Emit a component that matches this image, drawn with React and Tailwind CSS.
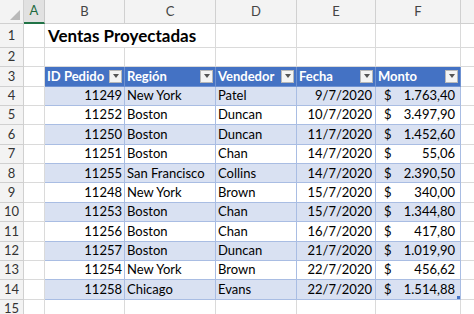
import React from 'react';

const cols = [
  { key: 'A', w: 'w-[21px]' },
  { key: 'B', w: 'w-[80px]' },
  { key: 'C', w: 'w-[91px]' },
  { key: 'D', w: 'w-[81px]' },
  { key: 'E', w: 'w-[79px]' },
  { key: 'F', w: 'w-[85px]' },
];

const rows = [
  ['11249', 'New York', 'Patel', '9/7/2020', '1.763,40'],
  ['11252', 'Boston', 'Duncan', '10/7/2020', '3.497,90'],
  ['11250', 'Boston', 'Duncan', '11/7/2020', '1.452,60'],
  ['11251', 'Boston', 'Chan', '14/7/2020', '55,06'],
  ['11255', 'San Francisco', 'Collins', '14/7/2020', '2.390,50'],
  ['11248', 'New York', 'Brown', '15/7/2020', '340,00'],
  ['11253', 'Boston', 'Chan', '15/7/2020', '1.344,80'],
  ['11256', 'Boston', 'Chan', '16/7/2020', '417,80'],
  ['11257', 'Boston', 'Duncan', '21/7/2020', '1.019,90'],
  ['11254', 'New York', 'Brown', '22/7/2020', '456,62'],
  ['11258', 'Chicago', 'Evans', '22/7/2020', '1.514,88'],
];

const headers = ['ID Pedido', 'Región', 'Vendedor', 'Fecha', 'Monto'];

function RowHead({ n, h }) {
  return (
    <div className={`w-[24px] ${h} shrink-0 bg-[#f3f3f3] border-r border-b border-[#d0d0d0] flex items-center justify-center text-[13px] text-[#333]`}>
      {n}
    </div>
  );
}

function Cell({ w, h, className = '', children }) {
  return (
    <div className={`${w} ${h} shrink-0 border-r border-b border-[#dadada] ${className}`}>
      {children}
    </div>
  );
}

function Dropdown() {
  return (
    <span className="ml-auto mr-[2px] w-[13px] h-[13px] bg-[#f4f4f4] border border-[#b8b8b8] flex items-center justify-center">
      <span className="w-0 h-0 border-l-[3.5px] border-r-[3.5px] border-t-[4px] border-l-transparent border-r-transparent border-t-[#555]" />
    </span>
  );
}

export default function App() {
  const rh = 'h-[19.4px]';
  return (
    <div className="w-[474px] h-[314px] overflow-hidden bg-white font-['Lato','Liberation_Sans',sans-serif] text-[13px] text-black">
      {/* column letters */}
      <div className="flex h-[24px]">
        <div className="w-[24px] h-[24px] shrink-0 bg-[#f3f3f3] border-r border-b border-[#d0d0d0] relative">
          <span className="absolute right-[3px] bottom-[3px] w-0 h-0" style={{ borderBottom: '10px solid #b9b9b9', borderLeft: '10px solid transparent' }} />
        </div>
        {cols.map((c) => (
          <div
            key={c.key}
            className={`${c.w} shrink-0 h-[24px] flex items-center justify-center border-r text-[13px] ${
              c.key === 'A'
                ? 'bg-[#e1e1e1] border-b-2 border-b-[#217346] border-r-[#c8c8c8] text-[#1e6b3f]'
                : 'bg-[#f3f3f3] border-b border-[#d0d0d0] text-[#444]'
            }`}
          >
            {c.key}
          </div>
        ))}
        <div className="flex-1 h-[24px] bg-[#f3f3f3] border-b border-[#d0d0d0]" />
      </div>

      {/* row 1 */}
      <div className="flex">
        <RowHead n="1" h="h-[24px]" />
        <Cell w="w-[21px]" h="h-[24px]" />
        <div className="h-[24px] w-[171px] shrink-0 border-b border-r border-[#dadada] flex items-center pl-[3px] text-[17px] font-bold whitespace-nowrap">
          Ventas Proyectadas
        </div>
        <Cell w="w-[81px]" h="h-[24px]" />
        <Cell w="w-[79px]" h="h-[24px]" />
        <Cell w="w-[85px]" h="h-[24px]" />
        <div className="flex-1 h-[24px] border-b border-[#dadada]" />
      </div>

      {/* row 2 */}
      <div className="flex">
        <RowHead n="2" h="h-[19px]" />
        {cols.map((c) => (
          <Cell key={c.key} w={c.w} h="h-[19px]" />
        ))}
        <div className="flex-1 h-[19px] border-b border-[#dadada]" />
      </div>

      {/* row 3: table header */}
      <div className="flex">
        <RowHead n="3" h="h-[19.5px]" />
        <Cell w="w-[21px]" h="h-[19.5px]" />
        {headers.map((t, i) => (
          <div
            key={t}
            className={`${cols[i + 1].w} h-[19.5px] shrink-0 bg-[#4472c4] border-r border-b border-[#6f92d2] flex items-center pl-[2px] text-white font-bold whitespace-nowrap`}
          >
            <span>{t}</span>
            <Dropdown />
          </div>
        ))}
        <div className="flex-1 h-[19.5px] border-b border-[#dadada]" />
      </div>

      {/* data rows */}
      {rows.map((r, i) => {
        const band = i % 2 === 0 ? 'bg-[#d9e1f2]' : 'bg-white';
        const tc = `${rh} shrink-0 border-r border-b border-[#a9bde3] ${band} flex items-center whitespace-nowrap`;
        return (
          <div key={r[0]} className="flex">
            <RowHead n={i + 4} h={rh} />
            <Cell w="w-[21px]" h={rh} />
            <div className={`w-[80px] ${tc} justify-end pr-[2px]`}>{r[0]}</div>
            <div className={`w-[91px] ${tc} pl-[2px]`}>{r[1]}</div>
            <div className={`w-[81px] ${tc} pl-[2px]`}>{r[2]}</div>
            <div className={`w-[79px] ${tc} justify-end pr-[3px]`}>{r[3]}</div>
            <div className={`w-[85px] ${tc} pl-[8px] pr-[5px] justify-between relative`}>
              <span>$</span>
              <span>{r[4]}</span>
              {i === rows.length - 1 && (
                <span className="absolute right-0 bottom-0 w-[3px] h-[3px] bg-[#4472c4]" />
              )}
            </div>
            <div className={`flex-1 ${rh} border-b border-[#dadada]`} />
          </div>
        );
      })}

      {/* row 15 */}
      <div className="flex">
        <RowHead n="15" h="h-[19px]" />
        {cols.map((c) => (
          <Cell key={c.key} w={c.w} h="h-[19px]" />
        ))}
        <div className="flex-1 h-[19px] border-b border-[#dadada]" />
      </div>
    </div>
  );
}
